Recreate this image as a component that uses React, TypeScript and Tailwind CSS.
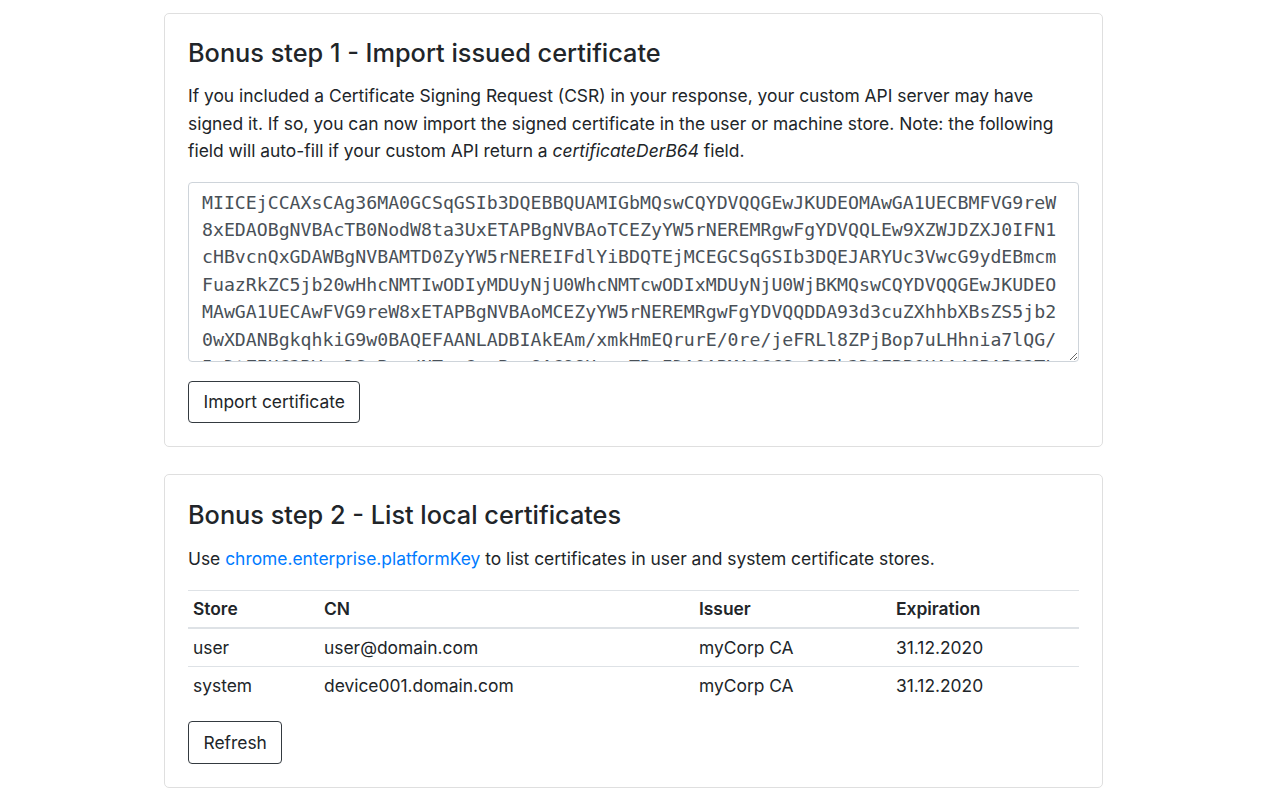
const CERT =
  "MIICEjCCAXsCAg36MA0GCSqGSIb3DQEBBQUAMIGbMQswCQYDVQQGEwJKUDEOMAwGA1UECBMFVG9reW" +
  "8xEDAOBgNVBAcTB0NodW8ta3UxETAPBgNVBAoTCEZyYW5rNEREMRgwFgYDVQQLEw9XZWJDZXJ0IFN1" +
  "cHBvcnQxGDAWBgNVBAMTD0ZyYW5rNEREIFdlYiBDQTEjMCEGCSqGSIb3DQEJARYUc3VwcG9ydEBmcm" +
  "FuazRkZC5jb20wHhcNMTIwODIyMDUyNjU0WhcNMTcwODIxMDUyNjU0WjBKMQswCQYDVQQGEwJKUDEO" +
  "MAwGA1UECAwFVG9reW8xETAPBgNVBAoMCEZyYW5rNEREMRgwFgYDVQQDDA93d3cuZXhhbXBsZS5jb2" +
  "0wXDANBgkqhkiG9w0BAQEFAANLADBIAkEAm/xmkHmEQrurE/0re/jeFRLl8ZPjBop7uLHhnia7lQG/" +
  "5zDtZIUC3RVpqDSwBuw/NTweGyuP+o8AG98HxqxTBwIDAQABMA0GCSqGSIb3DQEBBQUAA4GBABS2TLuB" +
  "eTPmcaTaUW/LCB2NYOy8GMdzR1mx8iBIu2H6/E2tiY3RIevV2OW61qY2/XRQg7YPxx3ffeUugX9F4J/" +
  "iPnnu1zAxxyBy2VguKv4SWjRFoRkIfIlHX0qVviMhSlNy2ioFLy7JcPZb+v3ftDGywUqcBiVDoea0Hn+GmxZA==";

const certs = [
  { store: "user", cn: "user@domain.com", issuer: "myCorp CA", expiration: "31.12.2020" },
  { store: "system", cn: "device001.domain.com", issuer: "myCorp CA", expiration: "31.12.2020" },
];

function Card({ children, top }: { children: React.ReactNode; top: string }) {
  return (
    <section className={`border border-[#dfdfdf] rounded-[5px] bg-white px-[23px] pb-[23px] ${top}`}>
      {children}
    </section>
  );
}

function OutlineButton({ label }: { label: string }) {
  return (
    <button className="border border-[#343a40] rounded-[4px] px-[14.5px] py-[6.6px] leading-[27.5px] text-[#212529] bg-white">
      {label}
    </button>
  );
}

export default function App() {
  return (
    <div className="min-h-screen bg-white text-[#212529] text-[17.4px] leading-[27.5px] font-['Inter','Liberation_Sans',sans-serif]">
      <div className="w-[939px] ml-[164px] pt-[13px] flex flex-col gap-[27px]">
        <Card top="pt-[23px]">
          <h3 className="text-[25.3px] leading-[32px] font-medium mb-[13px]">
            Bonus step 1 - Import issued certificate
          </h3>
          <p className="mb-[17px]">
            If you included a Certificate Signing Request (CSR) in your response, your custom API server may have
            signed it. If so, you can now import the signed certificate in the user or machine store. Note: the
            following field will auto-fill if your custom API return a <em>certificateDerB64</em> field.
          </p>
          <textarea
            readOnly
            value={CERT}
            className="block w-full h-[180px] border border-[#ced4da] rounded-[4px] px-[13px] pt-[6px] pb-[6px] text-[#495057] text-[18.2px] leading-[27.4px] font-['DejaVu_Sans_Mono',monospace] resize-y outline-none [scrollbar-width:none]"
          />
          <div className="mt-[19px]">
            <OutlineButton label="Import certificate" />
          </div>
        </Card>

        <Card top="pt-[24px]">
          <h3 className="text-[25.3px] leading-[32px] font-medium mb-[14px]">Bonus step 2 - List local certificates</h3>
          <p className="mb-[17px]">
            Use{" "}
            <a href="#" className="text-[#007bff]">
              chrome.enterprise.platformKey
            </a>{" "}
            to list certificates in user and system certificate stores.
          </p>
          <table className="w-full border-collapse mb-[17px] text-left">
            <thead>
              <tr className="border-t border-[#dee2e6] border-b-2">
                <th className="w-[131px] px-[5px] py-[4.5px] font-semibold">Store</th>
                <th className="w-[375px] px-[5px] py-[4.5px] font-semibold">CN</th>
                <th className="w-[197px] px-[5px] py-[4.5px] font-semibold">Issuer</th>
                <th className="px-[5px] py-[4.5px] font-semibold">Expiration</th>
              </tr>
            </thead>
            <tbody>
              {certs.map((c) => (
                <tr key={c.store} className="border-t border-[#dee2e6]">
                  <td className="px-[5px] py-[4.75px]">{c.store}</td>
                  <td className="px-[5px] py-[4.75px]">{c.cn}</td>
                  <td className="px-[5px] py-[4.75px]">{c.issuer}</td>
                  <td className="px-[5px] py-[4.75px]">{c.expiration}</td>
                </tr>
              ))}
            </tbody>
          </table>
          <OutlineButton label="Refresh" />
        </Card>
      </div>
    </div>
  );
}
